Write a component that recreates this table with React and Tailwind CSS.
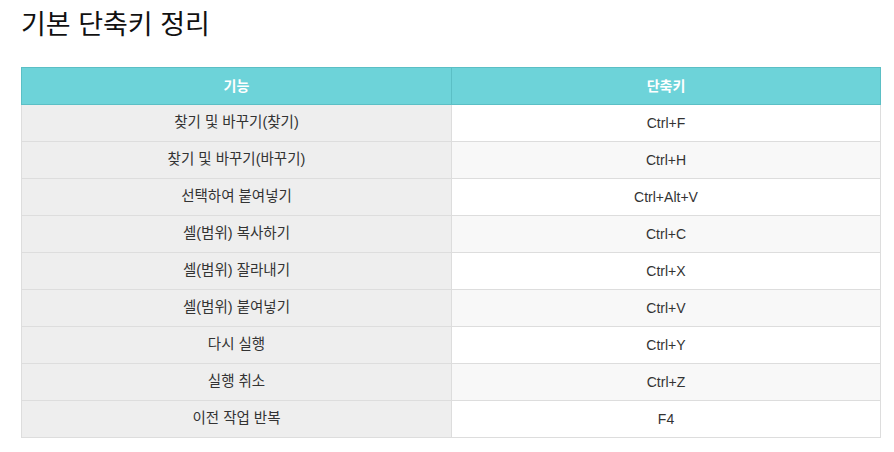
const rows = [
  ['찾기 및 바꾸기(찾기)', 'Ctrl+F'],
  ['찾기 및 바꾸기(바꾸기)', 'Ctrl+H'],
  ['선택하여 붙여넣기', 'Ctrl+Alt+V'],
  ['셀(범위) 복사하기', 'Ctrl+C'],
  ['셀(범위) 잘라내기', 'Ctrl+X'],
  ['셀(범위) 붙여넣기', 'Ctrl+V'],
  ['다시 실행', 'Ctrl+Y'],
  ['실행 취소', 'Ctrl+Z'],
  ['이전 작업 반복', 'F4'],
];

export default function App() {
  return (
    <div className="min-h-screen bg-white px-[21px] pt-[5px] font-['Liberation_Sans','Noto_Sans_CJK_KR',sans-serif] text-[#333]">
      <h1 className="text-[27px] leading-[40px] text-[#111] font-normal">기본 단축키 정리</h1>
      <table className="mt-[22px] w-[860px] border-collapse text-[14px] table-fixed">
        <thead>
          <tr className="h-[37px] bg-[#6dd3d9] text-white font-bold">
            <th className="w-[430px] border border-[#5bbfc5] font-bold">기능</th>
            <th className="border border-[#5bbfc5] font-bold">단축키</th>
          </tr>
        </thead>
        <tbody>
          {rows.map(([name, key], i) => (
            <tr key={name} className="h-[37px]">
              <td className="border border-[#dddddd] bg-[#eeeeee] text-center text-[14.5px]">{name}</td>
              <td className={`border border-[#dddddd] text-center ${i % 2 === 1 ? 'bg-[#f8f8f8]' : 'bg-white'}`}>{key}</td>
            </tr>
          ))}
        </tbody>
      </table>
    </div>
  );
}
